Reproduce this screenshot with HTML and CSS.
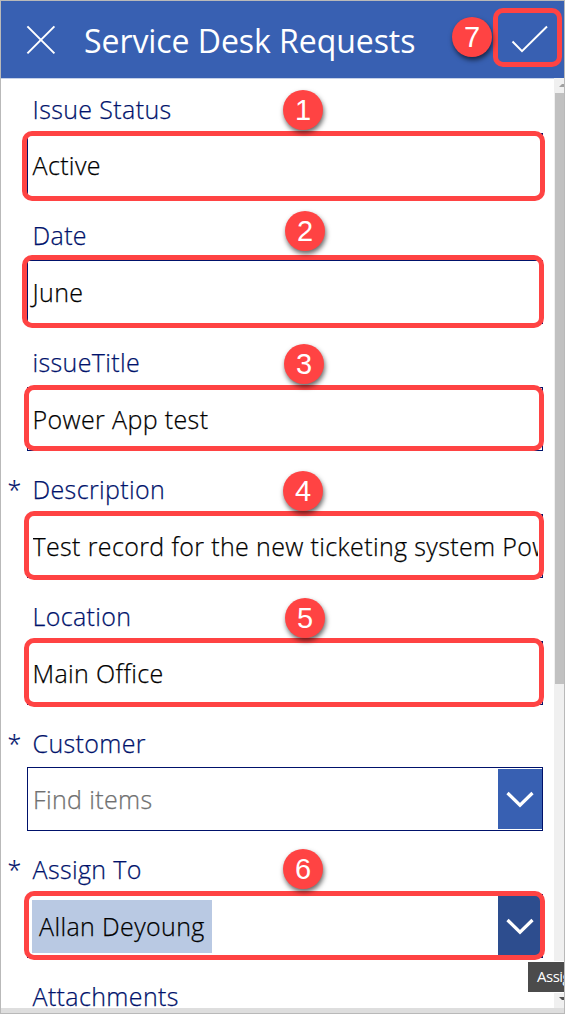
FILE: index.html
```html
<!DOCTYPE html>
<html lang="en">
<head>
<meta charset="utf-8">
<title>Service Desk Requests</title>
<link rel="stylesheet" href="styles.css">
</head>
<body>
<div class="app">
  <header class="header">
    <svg class="close" width="30" height="30" viewBox="0 0 30 30"><path d="M1.4 1.4 28.4 28.4M28.4 1.4 1.4 28.4"/></svg>
    <h1 class="title">Service Desk Requests</h1>
    <svg class="check" width="38" height="30" viewBox="0 0 38 30"><path d="M1.5 16.5 11 26.2 36 1.5"/></svg>
  </header>
  <div class="body">
    <main class="form">
      <section class="field"><label class="label">Issue Status</label><div class="input">Active</div></section>
      <section class="field"><label class="label">Date</label><div class="input">June</div></section>
      <section class="field"><label class="label">issueTitle</label><div class="input">Power App test</div></section>
      <section class="field"><label class="label required">Description</label><div class="input"><span class="value">Test record for the new ticketing system Pow</span></div></section>
      <section class="field"><label class="label">Location</label><div class="input">Main Office</div></section>
      <section class="field"><label class="label required">Customer</label>
        <div class="input combo"><span class="placeholder">Find items</span><span class="drop"><svg width="28" height="18" viewBox="0 0 28 18"><path d="M1.5 2 14 14.2 26.5 2"/></svg></span></div>
      </section>
      <section class="field"><label class="label required">Assign To</label>
        <div class="input combo active"><span class="chip">Allan Deyoung</span><span class="drop"><svg width="28" height="18" viewBox="0 0 28 18"><path d="M1.5 2 14 14.2 26.5 2"/></svg></span></div>
      </section>
      <section class="field"><label class="label">Attachments</label></section>
    </main>
    <aside class="scrollbar">
      <svg class="up" width="9" height="14" viewBox="0 0 9 14"><path d="M4 9 7 6H9V9Z"/></svg>
      <div class="thumb"></div>
      <svg class="down" width="9" height="14" viewBox="0 0 9 14"><path d="M4 4H9V7H7Z"/></svg>
    </aside>
  </div>
  <footer class="bottom"></footer>
</div>
<div class="mark m1"></div><div class="mark m2"></div><div class="mark m3"></div><div class="mark m4"></div>
<div class="mark m5"></div><div class="mark m6"></div><div class="mark m7"></div>
<div class="step s1">1</div><div class="step s2">2</div><div class="step s3">3</div><div class="step s4">4</div>
<div class="step s5">5</div><div class="step s6">6</div><div class="step s7">7</div>
<div class="tooltip">Assig</div>
</body>
</html>
```
FILE: styles.css
```css
* { box-sizing: border-box; }
body { margin: 0; width: 565px; height: 1014px; overflow: hidden; position: relative; background: #fff; font-family: "Open Sans", sans-serif; }
.app { width: 565px; height: 1014px; border: 1px solid #b9b9b9; display: flex; flex-direction: column; }
.header { height: 77px; flex: none; background: #3860b2; display: flex; align-items: center; padding: 0 15px 0 25px; }
.header svg { fill: none; stroke: #fff; stroke-width: 2; flex: none; }
.title { margin: 2px auto 0 28px; color: #fff; font-size: 32px; letter-spacing: -0.06px; font-weight: 400; line-height: 44px; white-space: nowrap; }
.body { flex: 1; min-height: 0; display: flex; }
.form { flex: 1; min-width: 0; overflow: hidden; border-top: 1px solid #c4d0e8; padding: 0 11px 0 26px; -webkit-text-stroke-width: 0.25px; }
.field { height: 126.8px; display: flex; flex-direction: column; }
.label { height: 54.4px; flex: none; padding: 12.6px 0 0 5.5px; font-size: 25px; line-height: 34px; font-weight: 300; letter-spacing: 0.37px; color: #00126b; white-space: nowrap; }
.required { margin-left: -25px; display: flex; }
.required::before { content: "*"; width: 25px; flex: none; }
.input { height: 64px; flex: none; border: 1px solid #00126b; padding: 0 4px 0 4.5px; font-size: 25px; font-weight: 300; letter-spacing: 0.37px; color: #000; display: flex; align-items: center; white-space: nowrap; overflow: hidden; }
.value { overflow: hidden; }
.placeholder { color: #707070; }
.combo { padding: 0 0 0 5px; justify-content: space-between; }
.drop { width: 44px; height: 60px; padding-top: 2px; background: #3860b2; display: flex; align-items: center; justify-content: center; }
.drop svg { fill: none; stroke: #fff; stroke-width: 3.2; }
.active { border-width: 2px; padding-left: 3px; }
.active .drop { background: #2d4d8e; margin-right: -1px; }
.chip { height: 53px; padding: 0 7px; background: #b9c9e3; line-height: 53px; }
.scrollbar { width: 10px; flex: none; background: #f0f0f0; display: flex; flex-direction: column; padding-left: 1px; }
.scrollbar svg { flex: none; }
.up { fill: #a0a0a0; margin-bottom: 1px; margin-top: 0; }
.thumb { height: 591px; flex: none; background: #c1c1c1; }
.down { fill: #505050; margin-top: auto; margin-bottom: 1px; }
.bottom { height: 5px; flex: none; background: #dedede; }

/* Numbered callouts laid over the form */
.mark { position: absolute; border: 5px solid #ff4343; border-radius: 10px; }
.m1 { left: 22px; top: 131px; width: 523px; height: 70px; }
.m2 { left: 22px; top: 255px; width: 522px; height: 73px; }
.m3 { left: 24px; top: 385px; width: 520px; height: 66px; }
.m4 { left: 24px; top: 511px; width: 520px; height: 69px; }
.m5 { left: 24px; top: 638px; width: 520px; height: 69px; }
.m6 { left: 24px; top: 891px; width: 521px; height: 69px; }
.m7 { left: 493px; top: 8px; width: 69px; height: 59px; }
.step { position: absolute; width: 40px; height: 40px; border-radius: 50%; background: #ff4343; color: #fff; font: 29px/40px "Liberation Sans", Arial, sans-serif; text-align: center; box-shadow: 1px 3px 5px rgba(0,0,0,.6); }
.s1 { left: 283px; top: 90px; }
.s2 { left: 285px; top: 211px; }
.s3 { left: 284px; top: 344px; }
.s4 { left: 283px; top: 471px; }
.s5 { left: 285px; top: 598px; }
.s6 { left: 283px; top: 849px; }
.s7 { left: 452px; top: 17px; }
.tooltip { position: absolute; left: 528px; top: 962px; width: 36px; height: 30px; padding-left: 9px; background: #4b4b4b; color: #fff; font-size: 15px; letter-spacing: -0.5px; line-height: 29px; white-space: nowrap; overflow: hidden; box-shadow: 0 0 0 1px #fff; clip-path: inset(-1px 0 -1px -1px); }
```
